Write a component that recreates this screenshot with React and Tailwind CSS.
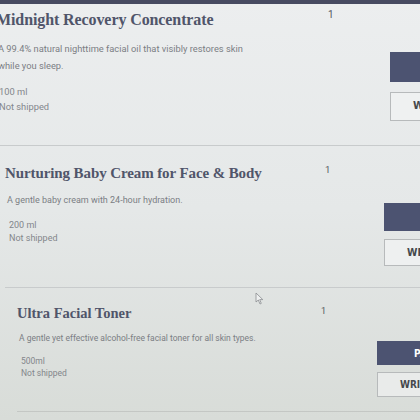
import React from "react";

export default function App() {
  return (
    <div className="relative w-[420px] h-[420px] overflow-hidden bg-linear-to-b from-[#eceeef] via-[#e5e8e8] to-[#d8dcd8]">
      <div className="h-[4px] bg-[#474b61]" />

      {/* Row 1 */}
      <div className="flex h-[142px] ml-[-4px] w-[600px] border-b border-[#c8cbcc]">
        <div className="w-[332px] pt-[6px]">
          <h2 className="text-[16px] leading-[20px] font-bold tracking-[-0.1px] text-[#50556a] whitespace-nowrap font-['Liberation_Serif',serif]">
            Midnight Recovery Concentrate
          </h2>
          <div className="mt-[10px] pl-[2px] text-[9.3px] leading-[17px] text-[#7b7e84] font-['Roboto',sans-serif]">
            <p className="whitespace-nowrap">A 99.4% natural nighttime facial oil that visibly restores skin</p>
            <p>while you sleep.</p>
          </div>
          <div className="mt-[10px] pl-[3px] text-[9.3px] leading-[15px] text-[#83868b] font-['Roboto',sans-serif]">
            <p>100 ml</p>
            <p>Not shipped</p>
          </div>
        </div>
        <div className="w-[62px] pt-[5px] text-[10px] leading-[12px] text-[#55595f] font-['Roboto',sans-serif]">1</div>
        <div className="flex flex-col font-['DejaVu_Sans_Condensed','DejaVu_Sans',sans-serif]">
          <button className="mt-[48px] h-[30px] w-[130px] bg-[#4c5371] text-white text-[11px] font-bold text-left pl-[37px]">PAY NOW</button>
          <button className="mt-[10px] h-[29px] w-[130px] border border-[#b7babb] bg-[#eff1f1] text-[#45484c] text-[11px] font-bold text-left pl-[22px]">WRITE A REVIEW</button>
        </div>
      </div>

      {/* Row 2 */}
      <div className="flex h-[142px] ml-[5px] w-[600px] border-b border-[#c8cbcc]">
        <div className="w-[320px] pt-[17px]">
          <h2 className="text-[15px] leading-[20px] font-bold tracking-[-0.1px] text-[#50556a] whitespace-nowrap font-['Liberation_Serif',serif]">
            Nurturing Baby Cream for Face &amp; Body
          </h2>
          <p className="mt-[10px] pl-[2px] text-[9px] leading-[14px] text-[#7b7e84] whitespace-nowrap font-['Roboto',sans-serif]">
            A gentle baby cream with 24-hour hydration.
          </p>
          <div className="mt-[12px] pl-[4px] text-[9px] leading-[13px] text-[#83868b] font-['Roboto',sans-serif]">
            <p>200 ml</p>
            <p>Not shipped</p>
          </div>
        </div>
        <div className="w-[59px] pt-[18px] text-[9.5px] leading-[12px] text-[#55595f] font-['Roboto',sans-serif]">1</div>
        <div className="flex flex-col font-['DejaVu_Sans_Condensed','DejaVu_Sans',sans-serif]">
          <button className="mt-[57px] h-[28px] w-[130px] bg-[#4c5371] text-white text-[10.5px] font-bold text-left pl-[37px]">PAY NOW</button>
          <button className="mt-[8px] h-[27px] w-[130px] border border-[#b7babb] bg-[#eef0f0] text-[#45484c] text-[10.5px] font-bold text-left pl-[22px]">WRITE A REVIEW</button>
        </div>
      </div>

      {/* Row 3 */}
      <div className="flex h-[124px] ml-[17px] w-[600px] border-b border-[#c4c7c4]">
        <div className="w-[304px] pt-[16px]">
          <h2 className="text-[14.5px] leading-[18px] font-bold text-[#50556a] whitespace-nowrap font-['Liberation_Serif',serif]">
            Ultra Facial Toner
          </h2>
          <p className="mt-[10px] pl-[2px] text-[8.5px] leading-[13px] text-[#7b7e84] whitespace-nowrap font-['Roboto',sans-serif]">
            A gentle yet effective alcohol-free facial toner for all skin types.
          </p>
          <div className="mt-[10px] pl-[4px] text-[8.5px] leading-[12px] text-[#83868b] font-['Roboto',sans-serif]">
            <p>500ml</p>
            <p>Not shipped</p>
          </div>
        </div>
        <div className="w-[56px] pt-[17px] text-[9px] leading-[12px] text-[#55595f] font-['Roboto',sans-serif]">1</div>
        <div className="flex flex-col font-['DejaVu_Sans_Condensed','DejaVu_Sans',sans-serif]">
          <button className="mt-[53px] h-[24px] w-[130px] bg-[#4c5371] text-white text-[10px] font-bold text-left pl-[37px]">PAY NOW</button>
          <button className="mt-[7px] h-[25px] w-[130px] border border-[#b7babb] bg-[#e9ebea] text-[#45484c] text-[10px] font-bold text-left pl-[22px]">WRITE A REVIEW</button>
        </div>
      </div>

      {/* mouse cursor */}
      <svg className="absolute left-[255px] top-[292px]" width="9" height="13" viewBox="0 0 9 13">
        <path d="M1 1 L1 10 L3.3 8 L5 12 L6.3 11.4 L4.7 7.6 L7.8 7.6 Z" fill="#eef0f0" stroke="#8a8d90" strokeWidth="0.8" strokeLinejoin="round" />
      </svg>
    </div>
  );
}
